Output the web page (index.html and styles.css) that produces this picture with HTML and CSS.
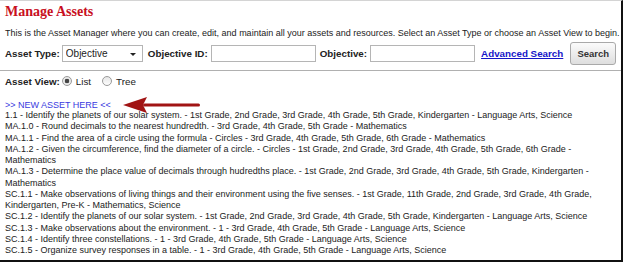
FILE: index.html
```html
<!DOCTYPE html>
<html lang="en">
<head>
    <meta charset="UTF-8">
    <title>Manage Assets</title>
    <link rel="stylesheet" href="styles.css">
</head>
<body>
    <div class="frame">
        <h1>Manage Assets</h1>
        <p class="intro">This is the Asset Manager where you can create, edit, and maintain all your assets and resources. Select an Asset Type or choose an Asset View to begin.</p>

        <!-- Search bar -->
        <div class="search-row">
            <label for="assetType">Asset Type:</label>
            <span class="select-wrap">
                <select id="assetType">
                    <option>Objective</option>
                    <option>Resource</option>
                </select>
            </span>
            <label for="objectiveId">Objective ID:</label>
            <input type="text" id="objectiveId" class="field">
            <label for="objective">Objective:</label>
            <input type="text" id="objective" class="field">
            <a href="#" class="adv-link">Advanced Search</a>
            <button type="button" class="btn">Search</button>
        </div>

        <hr class="divider">

        <div class="view-row">
            <span class="view-label">Asset View:</span>
            <label class="radio"><input type="radio" name="view" checked> List</label>
            <label class="radio"><input type="radio" name="view"> Tree</label>
        </div>

        <div class="new-row">
            <a href="#" class="new-link">&gt;&gt; NEW ASSET HERE &lt;&lt;</a>
            <svg class="arrow" width="80" height="18" viewBox="0 0 80 18">
                <path d="M0 9 L24 1 L20 9 L24 17 Z" fill="#a11414"/>
                <rect x="20" y="7.5" width="57" height="3" rx="1.5" fill="#a11414"/>
            </svg>
        </div>

        <ul class="assets">
            <li>1.1 - Identify the planets of our solar system. - 1st Grade, 2nd Grade, 3rd Grade, 4th Grade, 5th Grade, Kindergarten - Language Arts, Science</li>
            <li>MA.1.0 - Round decimals to the nearest hundredth. - 3rd Grade, 4th Grade, 5th Grade - Mathematics</li>
            <li>MA.1.1 - Find the area of a circle using the formula - Circles - 3rd Grade, 4th Grade, 5th Grade, 6th Grade - Mathematics</li>
            <li>MA.1.2 - Given the circumference, find the diameter of a circle. - Circles - 1st Grade, 2nd Grade, 3rd Grade, 4th Grade, 5th Grade, 6th Grade - Mathematics</li>
            <li>MA.1.3 - Determine the place value of decimals through hudredths place. - 1st Grade, 2nd Grade, 3rd Grade, 4th Grade, 5th Grade, Kindergarten - Mathematics</li>
            <li>SC.1.1 - Make observations of living things and their environment using the five senses. - 1st Grade, 11th Grade, 2nd Grade, 3rd Grade, 4th Grade, Kindergarten, Pre-K - Mathematics, Science</li>
            <li>SC.1.2 - Identify the planets of our solar system. - 1st Grade, 2nd Grade, 3rd Grade, 4th Grade, 5th Grade, Kindergarten - Language Arts, Science</li>
            <li>SC.1.3 - Make observations about the environment. - 1 - 3rd Grade, 4th Grade, 5th Grade - Language Arts, Science</li>
            <li>SC.1.4 - Identify three constellations. - 1 - 3rd Grade, 4th Grade, 5th Grade - Language Arts, Science</li>
            <li>SC.1.5 - Organize survey responses in a table. - 1 - 3rd Grade, 4th Grade, 5th Grade - Language Arts, Science</li>
        </ul>
    </div>
</body>
</html>
```

FILE: styles.css
```css
body {
    margin: 0;
    padding: 0;
    background-color: #fff;
    font-family: "Liberation Sans", Arial, sans-serif;
    color: #222;
}

.frame {
    box-sizing: border-box;
    width: 623px;
    height: 262px;
    padding: 0 0 0 5px;
    border-top: 1px solid #d4d4d4;
    border-right: 2px solid #111;
    border-bottom: 2px solid #111;
    overflow: hidden;
}

h1 {
    margin: 0;
    padding-top: 3px;
    font-family: "Liberation Serif", "Times New Roman", serif;
    font-size: 14px;
    line-height: 16px;
    color: #c8101e;
}

.intro {
    margin: 8px 0 0 0;
    font-size: 9px;
    line-height: 11px;
}

.search-row {
    display: flex;
    align-items: center;
    margin-top: 3px;
    height: 23px;
    white-space: nowrap;
}
.search-row label {
    flex-shrink: 0;
    font-size: 9.8px;
    font-weight: bold;
    margin-right: 3px;
}
.search-row label:first-child {
    margin-right: 2px;
}
.select-wrap {
    position: relative;
    display: inline-block;
    flex-shrink: 0;
    margin-right: 5px;
}
.select-wrap::after {
    content: "";
    position: absolute;
    right: 7px;
    top: 8px;
    border-left: 3px solid transparent;
    border-right: 3px solid transparent;
    border-top: 3px solid #222;
    pointer-events: none;
}
select {
    display: block;
    appearance: none;
    -webkit-appearance: none;
    box-sizing: border-box;
    width: 81px;
    height: 17px;
    padding: 0 0 0 3px;
    border: 1px solid #b5b5b5;
    border-radius: 0;
    background: #fff;
    font-family: "Liberation Sans", Arial, sans-serif;
    font-size: 10px;
    color: #222;
}
.field {
    flex-shrink: 0;
    box-sizing: border-box;
    width: 105px;
    height: 17px;
    margin: 0 4px 0 0;
    border: 1px solid #b5b5b5;
    padding: 0 3px;
}
.adv-link {
    flex-shrink: 0;
    margin-left: 2px;
    font-size: 9.8px;
    font-weight: bold;
    color: #1515c8;
    text-decoration: underline;
}
.btn {
    flex-shrink: 0;
    box-sizing: border-box;
    width: 46px;
    height: 23px;
    margin-left: 7px;
    padding: 0;
    border: 1px solid #a9a9a9;
    border-radius: 3px;
    background: linear-gradient(#fbfbfb, #dedede);
    font-family: "Liberation Sans", Arial, sans-serif;
    font-size: 9.5px;
    font-weight: bold;
    color: #333;
}

.divider {
    margin: 5px 0 0 -5px;
    border: none;
    border-top: 1px solid #b0b0b0;
    height: 0;
}

.view-row {
    display: flex;
    align-items: center;
    margin-top: 4px;
    height: 12px;
    font-size: 9.8px;
}
.view-label {
    font-weight: bold;
    margin-right: 2px;
}
.radio {
    display: flex;
    align-items: center;
    margin-right: 11px;
    gap: 4px;
}
.radio input {
    appearance: none;
    -webkit-appearance: none;
    box-sizing: border-box;
    width: 10px;
    height: 10px;
    margin: 0;
    border: 1px solid #9a9a9a;
    border-radius: 50%;
    background: linear-gradient(#e6e6e6, #fdfdfd);
}
.radio input:checked {
    background: radial-gradient(circle, #444 0 2px, #e9e9e9 2.6px);
}

.new-row {
    display: flex;
    align-items: center;
    margin-top: 13px;
    height: 10px;
}
.new-link {
    font-size: 9px;
    color: #3a3ae0;
    text-decoration: none;
}
.arrow {
    margin-left: 12px;
}

.assets {
    list-style: none;
    margin: 0;
    padding: 0;
    font-size: 9px;
    line-height: 11.25px;
}
```
